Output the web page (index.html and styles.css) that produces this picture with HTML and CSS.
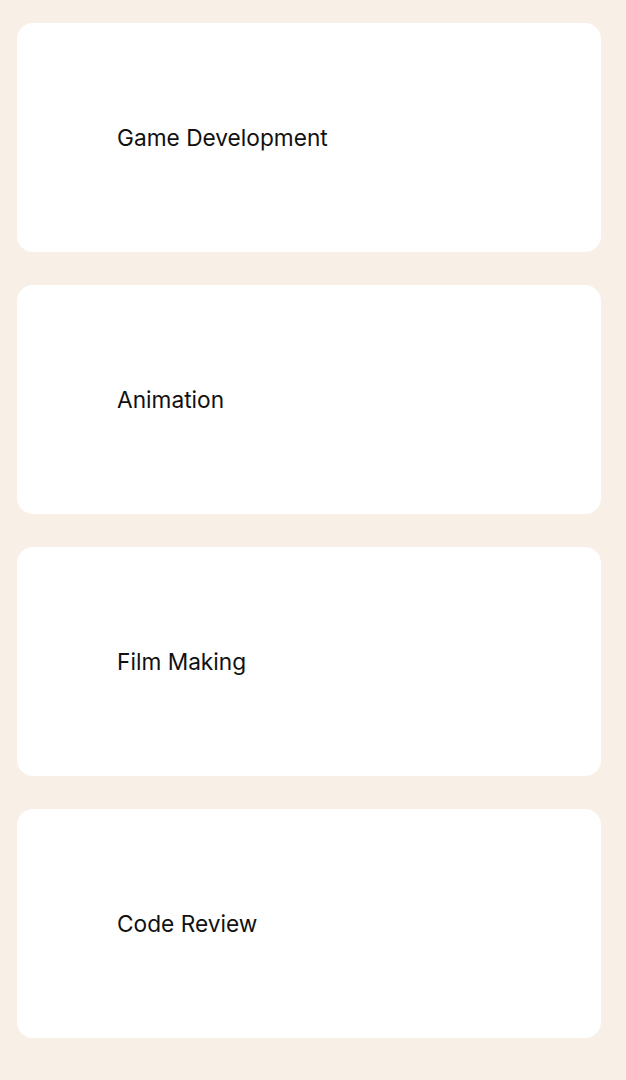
FILE: index.html
```html
<!DOCTYPE html>
<html>
<head>
<meta charset="utf-8">
<link rel="stylesheet" href="styles.css">
</head>
<body>
<main class="list">
  <div class="card"><span class="label">Game Development</span></div>
  <div class="card"><span class="label">Animation</span></div>
  <div class="card"><span class="label">Film Making</span></div>
  <div class="card"><span class="label">Code Review</span></div>
</main>
</body>
</html>
```

FILE: styles.css
```css
html, body {
  margin: 0;
  padding: 0;
  background: #f8f0e7;
}
body {
  font-family: Inter, "Noto Sans", sans-serif;
}
.list {
  display: flex;
  flex-direction: column;
  gap: 33px;
  padding: 23px 25px 0 17px;
}
.card {
  background: #ffffff;
  border-radius: 16px;
  height: 229px;
  display: flex;
  align-items: center;
  padding-left: 100px;
  box-sizing: border-box;
}
.label {
  font-size: 22.7px;
  color: #111111;
  letter-spacing: 0;
}
```
